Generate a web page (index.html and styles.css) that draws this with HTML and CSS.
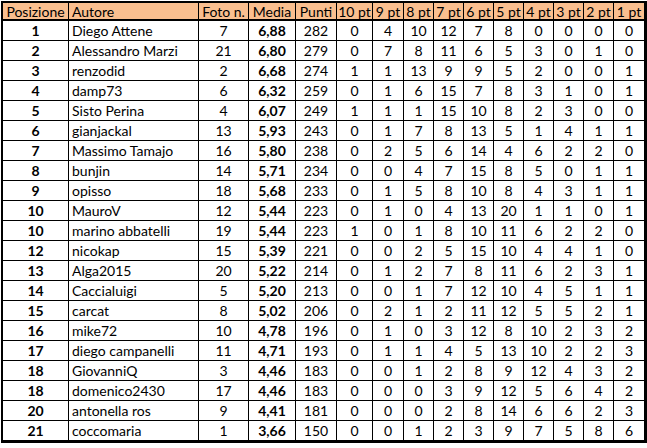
FILE: index.html
```html
<!DOCTYPE html>
<html lang="it">
<head>
<meta charset="utf-8">
<title>Classifica</title>
<link rel="stylesheet" href="styles.css">
</head>
<body>
<div class="sheet">
  <div class="row head"><div>Posizione</div><div class="name">Autore</div><div>Foto n.</div><div>Media</div><div>Punti</div><div>10 pt</div><div>9 pt</div><div>8 pt</div><div>7 pt</div><div>6 pt</div><div>5 pt</div><div>4 pt</div><div>3 pt</div><div>2 pt</div><div>1 pt</div></div>
  <div class="row"><div class="b">1</div><div class="name">Diego Attene</div><div>7</div><div class="b">6,88</div><div>282</div><div>0</div><div>4</div><div>10</div><div>12</div><div>7</div><div>8</div><div>0</div><div>0</div><div>0</div><div>0</div></div>
  <div class="row"><div class="b">2</div><div class="name">Alessandro Marzi</div><div>21</div><div class="b">6,80</div><div>279</div><div>0</div><div>7</div><div>8</div><div>11</div><div>6</div><div>5</div><div>3</div><div>0</div><div>1</div><div>0</div></div>
  <div class="row"><div class="b">3</div><div class="name">renzodid</div><div>2</div><div class="b">6,68</div><div>274</div><div>1</div><div>1</div><div>13</div><div>9</div><div>9</div><div>5</div><div>2</div><div>0</div><div>0</div><div>1</div></div>
  <div class="row"><div class="b">4</div><div class="name">damp73</div><div>6</div><div class="b">6,32</div><div>259</div><div>0</div><div>1</div><div>6</div><div>15</div><div>7</div><div>8</div><div>3</div><div>1</div><div>0</div><div>1</div></div>
  <div class="row"><div class="b">5</div><div class="name">Sisto Perina</div><div>4</div><div class="b">6,07</div><div>249</div><div>1</div><div>1</div><div>1</div><div>15</div><div>10</div><div>8</div><div>2</div><div>3</div><div>0</div><div>0</div></div>
  <div class="row"><div class="b">6</div><div class="name">gianjackal</div><div>13</div><div class="b">5,93</div><div>243</div><div>0</div><div>1</div><div>7</div><div>8</div><div>13</div><div>5</div><div>1</div><div>4</div><div>1</div><div>1</div></div>
  <div class="row"><div class="b">7</div><div class="name">Massimo Tamajo</div><div>16</div><div class="b">5,80</div><div>238</div><div>0</div><div>2</div><div>5</div><div>6</div><div>14</div><div>4</div><div>6</div><div>2</div><div>2</div><div>0</div></div>
  <div class="row"><div class="b">8</div><div class="name">bunjin</div><div>14</div><div class="b">5,71</div><div>234</div><div>0</div><div>0</div><div>4</div><div>7</div><div>15</div><div>8</div><div>5</div><div>0</div><div>1</div><div>1</div></div>
  <div class="row"><div class="b">9</div><div class="name">opisso</div><div>18</div><div class="b">5,68</div><div>233</div><div>0</div><div>1</div><div>5</div><div>8</div><div>10</div><div>8</div><div>4</div><div>3</div><div>1</div><div>1</div></div>
  <div class="row"><div class="b">10</div><div class="name">MauroV</div><div>12</div><div class="b">5,44</div><div>223</div><div>0</div><div>1</div><div>0</div><div>4</div><div>13</div><div>20</div><div>1</div><div>1</div><div>0</div><div>1</div></div>
  <div class="row"><div class="b">10</div><div class="name">marino abbatelli</div><div>19</div><div class="b">5,44</div><div>223</div><div>1</div><div>0</div><div>1</div><div>8</div><div>10</div><div>11</div><div>6</div><div>2</div><div>2</div><div>0</div></div>
  <div class="row"><div class="b">12</div><div class="name">nicokap</div><div>15</div><div class="b">5,39</div><div>221</div><div>0</div><div>0</div><div>2</div><div>5</div><div>15</div><div>10</div><div>4</div><div>4</div><div>1</div><div>0</div></div>
  <div class="row"><div class="b">13</div><div class="name">Alga2015</div><div>20</div><div class="b">5,22</div><div>214</div><div>0</div><div>1</div><div>2</div><div>7</div><div>8</div><div>11</div><div>6</div><div>2</div><div>3</div><div>1</div></div>
  <div class="row"><div class="b">14</div><div class="name">Caccialuigi</div><div>5</div><div class="b">5,20</div><div>213</div><div>0</div><div>0</div><div>1</div><div>7</div><div>12</div><div>10</div><div>4</div><div>5</div><div>1</div><div>1</div></div>
  <div class="row"><div class="b">15</div><div class="name">carcat</div><div>8</div><div class="b">5,02</div><div>206</div><div>0</div><div>2</div><div>1</div><div>2</div><div>11</div><div>12</div><div>5</div><div>5</div><div>2</div><div>1</div></div>
  <div class="row"><div class="b">16</div><div class="name">mike72</div><div>10</div><div class="b">4,78</div><div>196</div><div>0</div><div>1</div><div>0</div><div>3</div><div>12</div><div>8</div><div>10</div><div>2</div><div>3</div><div>2</div></div>
  <div class="row"><div class="b">17</div><div class="name">diego campanelli</div><div>11</div><div class="b">4,71</div><div>193</div><div>0</div><div>1</div><div>1</div><div>4</div><div>5</div><div>13</div><div>10</div><div>2</div><div>2</div><div>3</div></div>
  <div class="row"><div class="b">18</div><div class="name">GiovanniQ</div><div>3</div><div class="b">4,46</div><div>183</div><div>0</div><div>0</div><div>1</div><div>2</div><div>8</div><div>9</div><div>12</div><div>4</div><div>3</div><div>2</div></div>
  <div class="row"><div class="b">18</div><div class="name">domenico2430</div><div>17</div><div class="b">4,46</div><div>183</div><div>0</div><div>0</div><div>0</div><div>3</div><div>9</div><div>12</div><div>5</div><div>6</div><div>4</div><div>2</div></div>
  <div class="row"><div class="b">20</div><div class="name">antonella ros</div><div>9</div><div class="b">4,41</div><div>181</div><div>0</div><div>0</div><div>0</div><div>2</div><div>8</div><div>14</div><div>6</div><div>6</div><div>2</div><div>3</div></div>
  <div class="row"><div class="b">21</div><div class="name">coccomaria</div><div>1</div><div class="b">3,66</div><div>150</div><div>0</div><div>0</div><div>1</div><div>2</div><div>3</div><div>9</div><div>7</div><div>5</div><div>8</div><div>6</div></div>
</div>
</body>
</html>
```
FILE: styles.css
```css
body {
  margin: 0;
  background: #ffffff;
  color: #000000;
  font-family: Lato, "Liberation Sans", sans-serif;
  font-size: 14px;
}

.sheet {
  margin: 1px 0 0 1px;
  width: 641px;
  border-style: solid;
  border-color: #000000;
  border-width: 2px 3px 3px 2px;
}

.row {
  display: grid;
  grid-template-columns: 66px 130px 50px 47px 41px 36px 31px 30px 30px 30px 30px 30px 30px 30px 30px;
  height: 20px;
  box-sizing: border-box;
  border-bottom: 1px solid #000000;
}

.row:last-child {
  height: 19px;
  border-bottom: 0;
}

.head {
  height: 18px;
  background: #fabf8f;
  border-bottom-width: 2px;
}

.row > div {
  border-right: 1px solid #000000;
  text-align: center;
  line-height: 20px;
  white-space: nowrap;
  overflow: hidden;
}

.head > div {
  line-height: 17px;
}

.row > div:last-child {
  border-right: 0;
}

.row > .name {
  text-align: left;
  padding-left: 3px;
}

.b {
  font-weight: bold;
}
```
